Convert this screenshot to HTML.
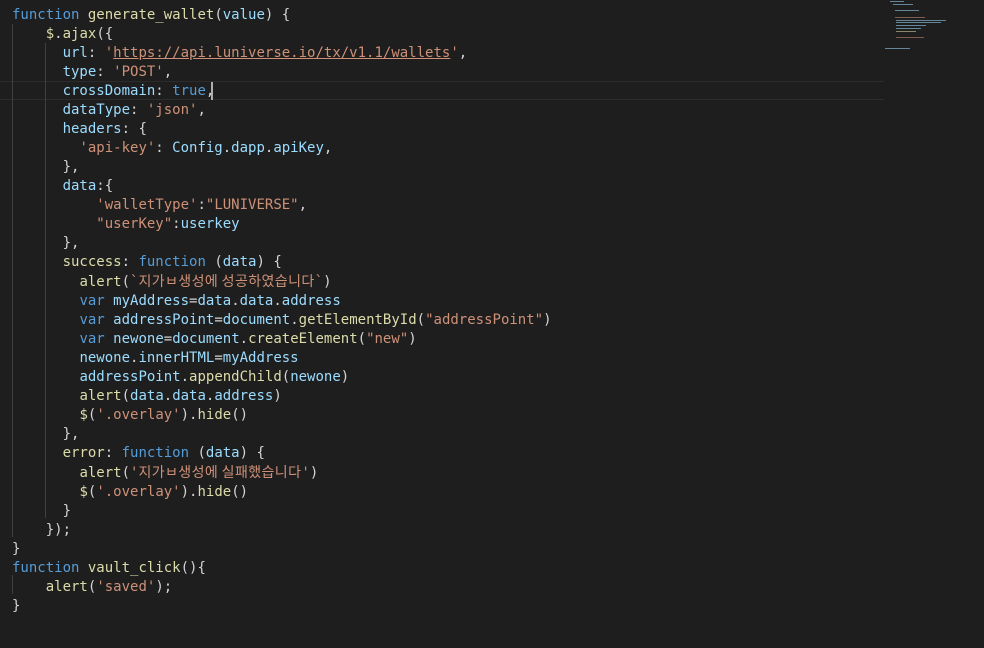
<!DOCTYPE html>
<html><head><meta charset="utf-8"><style>
html,body{margin:0;padding:0;background:#1e1e1e;width:984px;height:648px;overflow:hidden}
pre{margin:0;position:absolute;left:12px;top:6px;font-family:"DejaVu Sans Mono","Liberation Mono","Noto Sans CJK KR",monospace;font-size:14px;line-height:19px;color:#d4d4d4}
.k{color:#569cd6}.f{color:#dcdcaa}.s{color:#ce9178}.v{color:#9cdcfe}.u{text-decoration:underline;text-decoration-color:#ce9178}
.g{position:absolute;width:1px;background:#404040}
.cl{position:absolute;left:0;width:884px;top:81px;height:17px;border-top:1px solid #2c2c2c;border-bottom:1px solid #2c2c2c}
.cur{position:absolute;left:211px;top:82px;width:2px;height:18px;background:#aeafad}
.kr{font-family:"Noto Sans CJK KR",sans-serif;letter-spacing:0.4px}
.m{position:absolute;height:1px;opacity:.55}
</style></head><body>
<div class="cl"></div>
<div class="g" style="left:12px;top:24px;height:513px"></div>
<div class="g" style="left:45px;top:43px;height:475px"></div>
<div class="g" style="left:12px;top:575px;height:19px"></div>
<div class="cur"></div>
<div class="m" style="left:890px;top:1px;width:14px;background:#9cdcfe"></div>
<div class="m" style="left:893px;top:4px;width:20px;background:#9cdcfe"></div>
<div class="m" style="left:895px;top:10px;width:24px;background:#9cdcfe"></div>
<div class="m" style="left:895px;top:17px;width:30px;background:#ce9178"></div>
<div class="m" style="left:896px;top:20px;width:50px;background:#9cdcfe"></div>
<div class="m" style="left:896px;top:22px;width:45px;background:#9cdcfe"></div>
<div class="m" style="left:896px;top:25px;width:30px;background:#9cdcfe"></div>
<div class="m" style="left:896px;top:28px;width:25px;background:#9cdcfe"></div>
<div class="m" style="left:896px;top:31px;width:20px;background:#dcdcaa"></div>
<div class="m" style="left:896px;top:37px;width:28px;background:#ce9178"></div>
<div class="m" style="left:885px;top:48px;width:25px;background:#9cdcfe"></div>
<pre><span class="k">function</span> <span class="f">generate_wallet</span>(<span class="v">value</span>) {
    <span class="f">$</span>.<span class="f">ajax</span>({
      <span class="v">url</span>: <span class="s">'<span class="u">https://api.luniverse.io/tx/v1.1/wallets</span>'</span>,
      <span class="v">type</span>: <span class="s">'POST'</span>,
      <span class="v">crossDomain</span>: <span class="k">true</span>,
      <span class="v">dataType</span>: <span class="s">'json'</span>,
      <span class="v">headers</span>: {
        <span class="s">'api-key'</span>: <span class="v">Config</span>.<span class="v">dapp</span>.<span class="v">apiKey</span>,
      },
      <span class="v">data</span>:{
          <span class="s">'walletType'</span>:<span class="s">"LUNIVERSE"</span>,
          <span class="s">"userKey"</span>:<span class="v">userkey</span>
      },
      <span class="f">success</span>: <span class="k">function</span> (<span class="v">data</span>) {
        <span class="f">alert</span>(<span class="s">`<span class="kr">지가ㅂ생성에 성공하였습니다</span>`</span>)
        <span class="k">var</span> <span class="v">myAddress</span>=<span class="v">data</span>.<span class="v">data</span>.<span class="v">address</span>
        <span class="k">var</span> <span class="v">addressPoint</span>=<span class="v">document</span>.<span class="f">getElementById</span>(<span class="s">"addressPoint"</span>)
        <span class="k">var</span> <span class="v">newone</span>=<span class="v">document</span>.<span class="f">createElement</span>(<span class="s">"new"</span>)
        <span class="v">newone</span>.<span class="v">innerHTML</span>=<span class="v">myAddress</span>
        <span class="v">addressPoint</span>.<span class="f">appendChild</span>(<span class="v">newone</span>)
        <span class="f">alert</span>(<span class="v">data</span>.<span class="v">data</span>.<span class="v">address</span>)
        <span class="f">$</span>(<span class="s">'.overlay'</span>).<span class="f">hide</span>()
      },
      <span class="f">error</span>: <span class="k">function</span> (<span class="v">data</span>) {
        <span class="f">alert</span>(<span class="s">'<span class="kr">지가ㅂ생성에 실패했습니다</span>'</span>)
        <span class="f">$</span>(<span class="s">'.overlay'</span>).<span class="f">hide</span>()
      }
    });
}
<span class="k">function</span> <span class="f">vault_click</span>(){
    <span class="f">alert</span>(<span class="s">'saved'</span>);
}</pre>
</body></html>
